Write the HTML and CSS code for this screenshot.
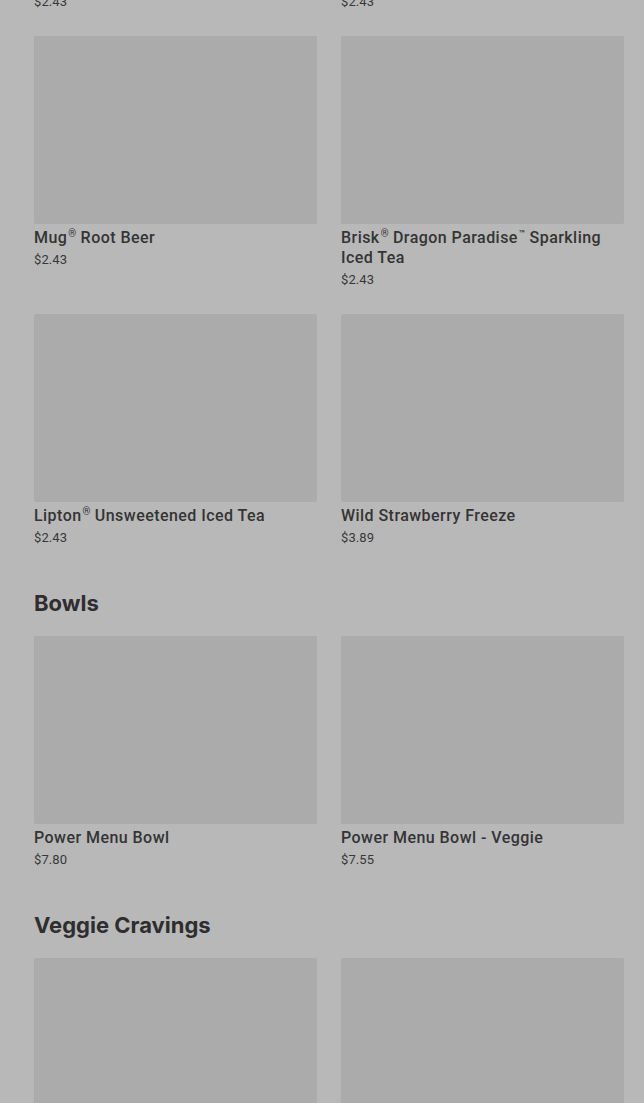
FILE: index.html
```html
<!DOCTYPE html>
<html>
<head>
<meta charset="utf-8">
<link rel="stylesheet" href="styles.css">
</head>
<body>
<main class="menu">
  <section class="section">
    <div class="grid grid-tail">
      <div class="item"><div class="price">$2.43</div></div>
      <div class="item"><div class="price">$2.43</div></div>
    </div>
    <div class="grid">
      <div class="item">
        <div class="thumb"></div>
        <div class="name">Mug<span class="mark">®</span> Root Beer</div>
        <div class="price">$2.43</div>
      </div>
      <div class="item">
        <div class="thumb"></div>
        <div class="name">Brisk<span class="mark">®</span> Dragon Paradise<span class="mark">™</span> Sparkling Iced Tea</div>
        <div class="price">$2.43</div>
      </div>
      <div class="item">
        <div class="thumb"></div>
        <div class="name">Lipton<span class="mark">®</span> Unsweetened Iced Tea</div>
        <div class="price">$2.43</div>
      </div>
      <div class="item">
        <div class="thumb"></div>
        <div class="name">Wild Strawberry Freeze</div>
        <div class="price">$3.89</div>
      </div>
    </div>
  </section>
  <section class="section">
    <h2 class="heading">Bowls</h2>
    <div class="grid">
      <div class="item">
        <div class="thumb"></div>
        <div class="name">Power Menu Bowl</div>
        <div class="price">$7.80</div>
      </div>
      <div class="item">
        <div class="thumb"></div>
        <div class="name">Power Menu Bowl - Veggie</div>
        <div class="price">$7.55</div>
      </div>
    </div>
  </section>
  <section class="section">
    <h2 class="heading">Veggie Cravings</h2>
    <div class="grid">
      <div class="item">
        <div class="thumb"></div>
      </div>
      <div class="item">
        <div class="thumb"></div>
      </div>
    </div>
  </section>
</main>
</body>
</html>
```
FILE: styles.css
```css
html, body {
  margin: 0;
  padding: 0;
  background: #b8b8b8;
  overflow: hidden;
}
body {
  font-family: Roboto, "Liberation Sans", sans-serif;
  color: #303030;
}
.menu {
  padding: 0 20px 0 34px;
  margin-top: -8px;
  display: flex;
  flex-direction: column;
  gap: 41px;
}
.section {
  display: flex;
  flex-direction: column;
}
.grid {
  display: grid;
  grid-template-columns: 283px 283px;
  column-gap: 24px;
  row-gap: 24px;
}
.grid-tail {
  margin-bottom: 24px;
}
.item {
  display: flex;
  flex-direction: column;
}
.thumb {
  height: 188px;
  background: #ababab;
  border-radius: 2px;
}
.name {
  margin-top: 4px;
  font-size: 16px;
  line-height: 20px;
  font-weight: 500;
  letter-spacing: 0.45px;
  color: #343434;
}
.mark {
  display: inline-block;
  font-size: 10px;
  line-height: 10px;
  vertical-align: top;
  letter-spacing: 0;
  margin: 1px 0 0 1px;
}
.price {
  margin-top: 2px;
  font-size: 13px;
  line-height: 20px;
  letter-spacing: 0.1px;
  color: #383838;
}
.grid-tail .price {
  margin-top: 0;
}
.heading {
  margin: 0 0 19px;
  font-family: Inter, "Liberation Sans", sans-serif;
  font-size: 22px;
  line-height: 28px;
  font-weight: 700;
  letter-spacing: 0;
  color: #2e2e2e;
}
```
